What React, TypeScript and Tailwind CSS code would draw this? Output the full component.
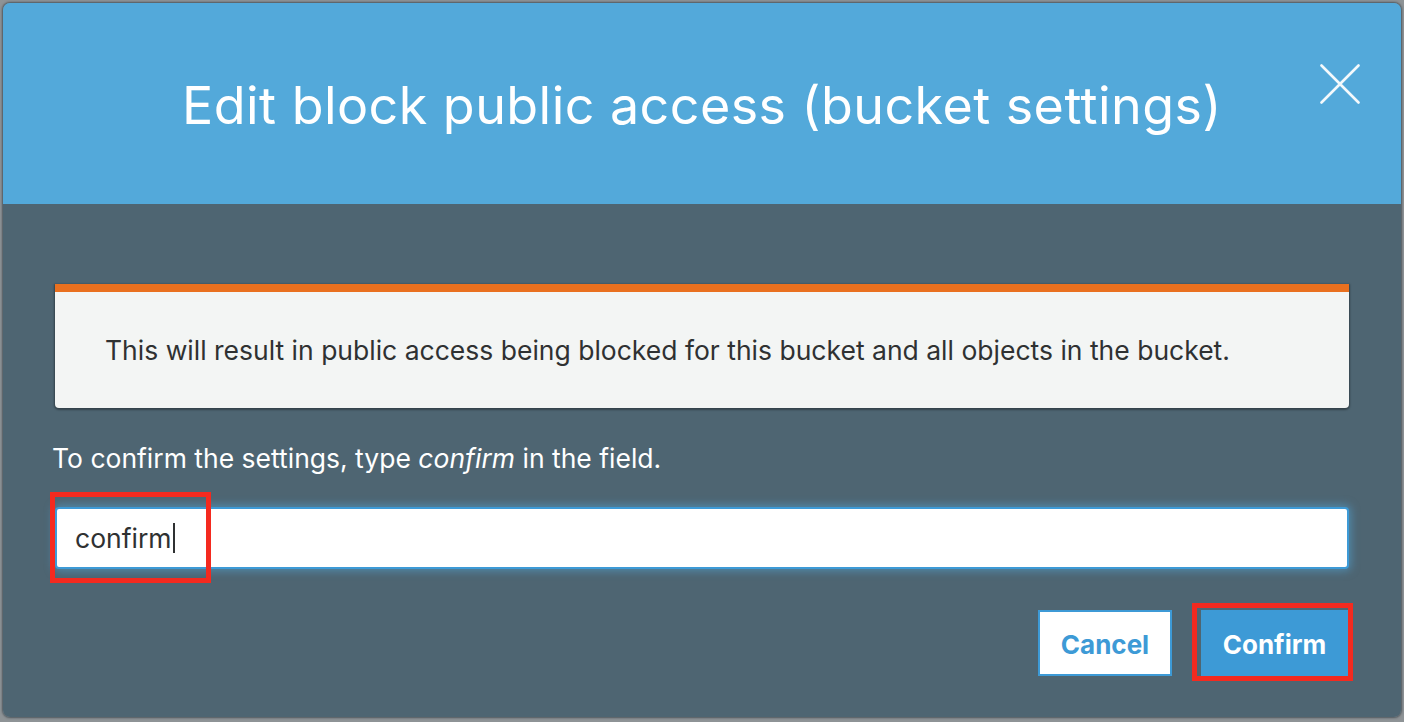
export default function App() {
  return (
    <div className="w-[1404px] h-[722px] bg-[#8e9396] pt-[3px] pl-[3px] font-['Inter','Liberation_Sans',sans-serif] overflow-hidden">
      <div className="w-[1398px] h-[714px] rounded-[7px] overflow-hidden flex flex-col shadow-[0_0_2px_1px_rgba(30,40,50,0.55)]">
        <header className="relative h-[201px] shrink-0 bg-[#53a9da] flex items-center justify-center pt-[4px]">
          <h1 className="text-white text-[52px] leading-[60px] tracking-[0.45px] font-normal whitespace-nowrap">
            Edit block public access (bucket settings)
          </h1>
          <button
            aria-label="Close"
            className="absolute right-[41px] top-[61px] w-[40px] h-[40px] flex items-center justify-center"
          >
            <svg width="40" height="40" viewBox="0 0 40 40" fill="none">
              <path d="M1.5 1.5 L38.5 38.5 M38.5 1.5 L1.5 38.5" stroke="#f4f9fc" strokeWidth="2.6" strokeLinecap="round" />
            </svg>
          </button>
        </header>
        <div className="flex-1 bg-[#4e6572] px-[52px] pt-[80px] flex flex-col">
          <div className="bg-[#f3f5f4] border-t-[8px] border-[#e9701f] rounded-b-[4px] shadow-[0_1px_2px_1px_rgba(0,0,0,0.35)] pl-[50px] pr-[20px] pt-[42px] pb-[42px]">
            <p className="text-[26.5px] leading-[32px] text-[#2f3132] whitespace-nowrap">
              This will result in public access being blocked for this bucket and all objects in the bucket.
            </p>
          </div>
          <p className="mt-[34px] -ml-[3px] text-[26.5px] leading-[32px] text-white whitespace-nowrap">
            To confirm the settings, type <em className="italic">confirm</em> in the field.
          </p>
          <div className="relative mt-[33px]">
            <div className="h-[62px] bg-white border-2 border-[#3d9ad6] rounded-[4px] shadow-[0_0_9px_2px_rgba(82,168,218,0.55)] flex items-center pl-[18px]">
              <span className="text-[26.5px] leading-[32px] text-[#2f3132]">confirm</span>
              <span className="ml-[1px] w-[2px] h-[30px] bg-[#2f3132]" />
            </div>
            <div className="absolute left-[-5px] top-[-15px] w-[161px] h-[91px] border-[5px] border-[#f42a1f] pointer-events-none" />
          </div>
          <div className="mt-[41px] flex justify-end pr-[1px] gap-[29px]">
            <button className="w-[134px] h-[66px] pt-[3px] bg-white border-2 border-[#3d9ad6] text-[#3d9ad6] text-[26px] font-bold flex items-center justify-center">
              Cancel
            </button>
            <div className="relative">
              <button className="w-[147px] h-[66px] pt-[3px] bg-[#3d9ad6] text-white text-[26px] font-bold flex items-center justify-center">
                Confirm
              </button>
              <div className="absolute left-[-9px] top-[-7px] w-[161px] h-[78px] border-[5px] border-[#f42a1f] pointer-events-none" />
            </div>
          </div>
        </div>
      </div>
    </div>
  );
}
